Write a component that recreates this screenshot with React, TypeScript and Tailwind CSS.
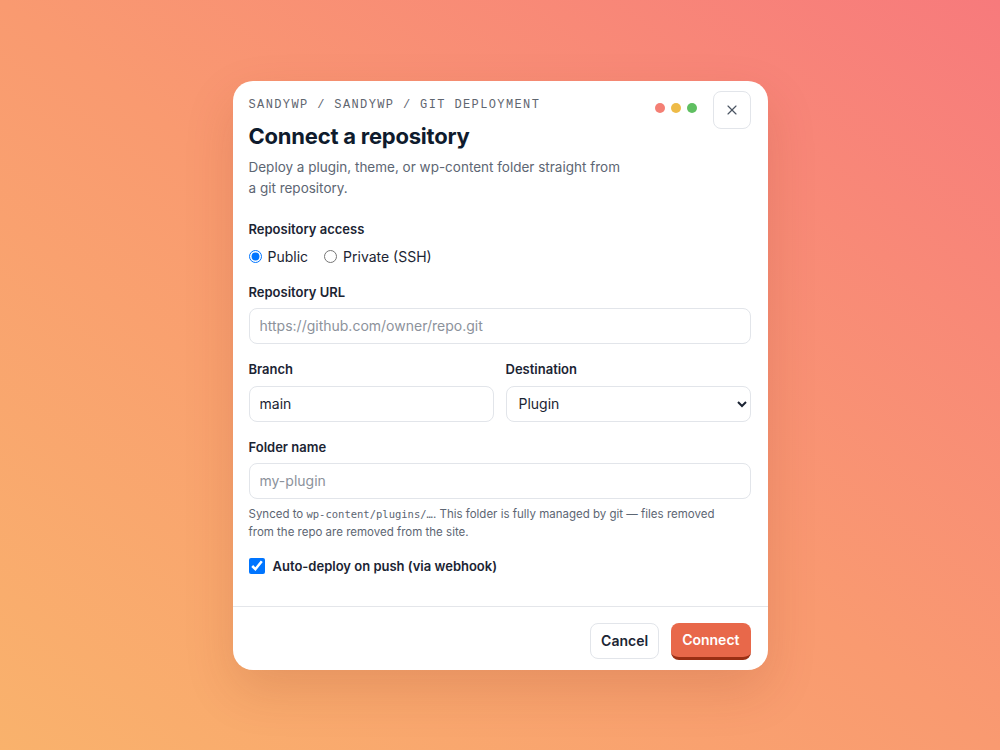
import { X } from 'lucide-react';

const sans = { fontFamily: 'Inter, "Noto Sans", sans-serif' };

export default function App() {
  return (
    <div
      className="flex h-[750px] w-full items-center justify-center bg-gradient-to-tr from-[#f9b26c] via-[#f99a70] to-[#f77a7c]"
      style={sans}
    >
      <div className="flex w-[535px] flex-col rounded-[20px] bg-white shadow-[0_20px_50px_rgba(120,40,20,0.15)]">
        {/* header */}
        <div className="flex items-start justify-between pl-4 pr-[17px] pt-4">
          <div className="flex flex-col">
            <div className="font-['Liberation_Mono',monospace] text-[12px] leading-4 tracking-[0.115em] text-[#5f6670]">
              SANDYWP / SANDYWP / GIT DEPLOYMENT
            </div>
            <h1 className="mt-[7px] text-[22px] font-bold leading-8 tracking-[-0.01em] text-[#0f1b2d]">
              Connect a repository
            </h1>
            <p className="mt-[5px] max-w-[382px] text-[13.5px] leading-[21px] text-[#5d6673]">
              Deploy a plugin, theme, or wp-content folder straight from a git repository.
            </p>
          </div>
          <div className="-mt-[6px] flex items-center gap-4">
            <div className="-mt-[4px] flex items-center gap-[6px]">
              <span className="h-[10px] w-[10px] rounded-full bg-[#f47f74]" />
              <span className="h-[10px] w-[10px] rounded-full bg-[#eebb48]" />
              <span className="h-[10px] w-[10px] rounded-full bg-[#5fbf61]" />
            </div>
            <button
              type="button"
              className="flex h-[38px] w-[38px] items-center justify-center rounded-lg border border-[#e2e5ea] text-[#4b5563]"
            >
              <X className="h-4 w-4" strokeWidth={1.75} />
            </button>
          </div>
        </div>

        {/* body */}
        <div className="flex flex-col pl-4 pr-[17px] pb-[30px] pt-5">
          <div className="text-[13px] font-semibold leading-5 text-[#1b2433]">Repository access</div>
          <div className="mt-2 flex items-center gap-4 text-[14px] leading-5 text-[#1b2433]">
            <label className="flex items-center gap-[6px]">
              <input type="radio" name="access" defaultChecked className="m-0 h-[13px] w-[13px]" />
              Public
            </label>
            <label className="flex items-center gap-[6px]">
              <input type="radio" name="access" className="m-0 h-[13px] w-[13px]" />
              Private (SSH)
            </label>
          </div>

          <div className="mt-[15px] text-[13px] font-semibold leading-5 text-[#1b2433]">Repository URL</div>
          <input
            type="text"
            placeholder="https://github.com/owner/repo.git"
            className="mt-1.5 h-9 w-full rounded-lg border border-[#e2e5ea] px-[10px] text-[14px] text-[#1b2433] outline-none placeholder:text-[#8c929b]"
          />

          <div className="mt-[15px] grid grid-cols-2 gap-3">
            <div className="flex flex-col">
              <div className="text-[13px] font-semibold leading-5 text-[#1b2433]">Branch</div>
              <input
                type="text"
                defaultValue="main"
                className="mt-[7px] h-9 w-full rounded-lg border border-[#e2e5ea] px-[10px] text-[14px] text-[#1b2433] outline-none"
              />
            </div>
            <div className="flex flex-col">
              <div className="text-[13px] font-semibold leading-5 text-[#1b2433]">Destination</div>
              <select
                defaultValue="plugin"
                className="mt-[7px] h-9 w-full rounded-lg border border-[#e2e5ea] bg-white px-[8px] text-[14px] text-[#1b2433] outline-none"
              >
                <option value="plugin">Plugin</option>
                <option value="theme">Theme</option>
                <option value="wp-content">wp-content</option>
              </select>
            </div>
          </div>

          <div className="mt-[15px] text-[13px] font-semibold leading-5 text-[#1b2433]">Folder name</div>
          <input
            type="text"
            placeholder="my-plugin"
            className="mt-1.5 h-9 w-full rounded-lg border border-[#e2e5ea] px-[10px] text-[14px] text-[#1b2433] outline-none placeholder:text-[#8c929b]"
          />
          <p className="mt-[6px] max-w-[480px] text-[11.5px] leading-[18px] text-[#5d6673]">
            Synced to{' '}
            <code className="font-['DejaVu_Sans_Mono',monospace] text-[10.5px] leading-[18px]">
              wp-content/plugins/…
            </code>
            . This folder is fully managed by git — files removed from the repo are removed from the site.
          </p>

          <label className="mt-[15px] flex items-center gap-2 text-[13px] font-semibold leading-5 text-[#1b2433]">
            <input type="checkbox" defaultChecked className="m-0 h-4 w-4" />
            Auto-deploy on push (via webhook)
          </label>
        </div>

        {/* footer */}
        <div className="flex justify-end gap-3 border-t border-[#e4e6ea] pl-4 pr-[17px] pb-[10px] pt-4">
          <button
            type="button"
            className="h-9 rounded-lg border border-[#e2e5ea] bg-white px-[10px] text-[14px] font-semibold text-[#1b2433]"
          >
            Cancel
          </button>
          <button
            type="button"
            className="h-[37px] rounded-lg border-b-[3px] border-[#9a2f14] bg-[#e8684a] px-[11px] text-[14px] font-semibold text-white"
          >
            Connect
          </button>
        </div>
      </div>
    </div>
  );
}
